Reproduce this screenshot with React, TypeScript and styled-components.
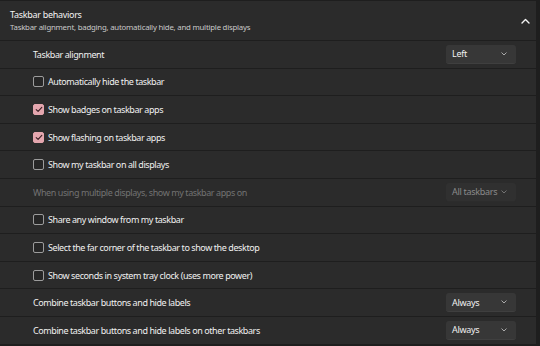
import styled, { createGlobalStyle } from "styled-components";

const GlobalStyle = createGlobalStyle`
  html, body {
    margin: 0;
    padding: 0;
    background: #202020;
  }
  body {
    font-family: "Noto Sans", "Open Sans", sans-serif;
    -webkit-font-smoothing: antialiased;
  }
`;

type Setting =
  | { kind: "select"; label: string; value: string; disabled?: boolean }
  | { kind: "check"; label: string; checked: boolean };

const settings: Setting[] = [
  { kind: "select", label: "Taskbar alignment", value: "Left" },
  { kind: "check", label: "Automatically hide the taskbar", checked: false },
  { kind: "check", label: "Show badges on taskbar apps", checked: true },
  { kind: "check", label: "Show flashing on taskbar apps", checked: true },
  { kind: "check", label: "Show my taskbar on all displays", checked: false },
  {
    kind: "select",
    label: "When using multiple displays, show my taskbar apps on",
    value: "All taskbars",
    disabled: true,
  },
  { kind: "check", label: "Share any window from my taskbar", checked: false },
  {
    kind: "check",
    label: "Select the far corner of the taskbar to show the desktop",
    checked: false,
  },
  {
    kind: "check",
    label: "Show seconds in system tray clock (uses more power)",
    checked: false,
  },
  { kind: "select", label: "Combine taskbar buttons and hide labels", value: "Always" },
  {
    kind: "select",
    label: "Combine taskbar buttons and hide labels on other taskbars",
    value: "Always",
  },
];

const ChevronUp = () => (
  <svg width="9" height="6" viewBox="0 0 9 6" fill="none">
    <path d="M1 5 L4.5 1.5 L8 5" stroke="#f5f5f5" strokeWidth="1.4" strokeLinecap="round" strokeLinejoin="round" />
  </svg>
);

const ChevronDown = ({ dim }: { dim?: boolean }) => (
  <svg width="6" height="4" viewBox="0 0 6 4" fill="none">
    <path d="M0.8 0.8 L3 3 L5.2 0.8" stroke={dim ? "#7a7a7a" : "#b8b8b8"} strokeWidth="0.9" strokeLinecap="round" strokeLinejoin="round" />
  </svg>
);

const CheckMark = () => (
  <svg width="8" height="7" viewBox="0 0 8 7" fill="none">
    <path d="M1.2 3.6 L3.1 5.4 L6.8 1.4" stroke="#3a1d22" strokeWidth="1.1" strokeLinecap="round" strokeLinejoin="round" />
  </svg>
);

const App = () => (
  <>
    <GlobalStyle />
    <Panel>
      <Header>
        <HeaderText>
          <Title>Taskbar behaviors</Title>
          <Subtitle>
            Taskbar alignment, badging, automatically hide, and multiple displays
          </Subtitle>
        </HeaderText>
        <Toggle>
          <ChevronUp />
        </Toggle>
      </Header>
      <List>
        {settings.map((s) =>
          s.kind === "check" ? (
            <Row key={s.label}>
              <CheckLabel>
                <Box $checked={s.checked}>{s.checked && <CheckMark />}</Box>
                {s.label}
              </CheckLabel>
            </Row>
          ) : (
            <Row key={s.label}>
              <Label $disabled={s.disabled}>{s.label}</Label>
              <Select $disabled={s.disabled}>
                <span>{s.value}</span>
                <ChevronDown dim={s.disabled} />
              </Select>
            </Row>
          )
        )}
      </List>
    </Panel>
  </>
);

const Panel = styled.div`
  width: 540px;
  height: 346px;
  background: #1e1e1e;
  overflow: hidden;
  display: flex;
  flex-direction: column;
  gap: 1px;
  padding-top: 1px;
  box-sizing: border-box;
  padding-right: 4px;
`;

const Header = styled.div`
  height: 39px;
  flex: none;
  background: #2b2b2b;
  display: flex;
  align-items: center;
  justify-content: space-between;
  padding: 0 6px 0 10px;
  box-sizing: border-box;
`;

const HeaderText = styled.div`
  display: flex;
  flex-direction: column;
  gap: 1px;
  white-space: nowrap;
`;

const Title = styled.div`
  color: #f3f3f3;
  font-size: 9px;
  letter-spacing: -0.3px;
  line-height: 13px;
`;

const Subtitle = styled.div`
  color: #c8c8c8;
  font-size: 7.8px;
  letter-spacing: -0.22px;
  line-height: 11px;
`;

const Toggle = styled.div`
  display: flex;
  align-items: center;
`;

const List = styled.div`
  display: flex;
  flex-direction: column;
  gap: 1px;
`;

const Row = styled.div`
  height: 26.6px;
  flex: none;
  background: #2b2b2b;
  display: flex;
  align-items: center;
  justify-content: space-between;
  padding: 0 20px 0 33px;
  box-sizing: border-box;
  white-space: nowrap;
`;

const Label = styled.div<{ $disabled?: boolean }>`
  color: ${(p) => (p.$disabled ? "#727272" : "#f0f0f0")};
  font-size: 9px;
  letter-spacing: -0.42px;
`;

const CheckLabel = styled.label`
  display: flex;
  align-items: center;
  gap: 4px;
  color: #f0f0f0;
  font-size: 9px;
  letter-spacing: -0.42px;
`;

const Box = styled.span<{ $checked: boolean }>`
  width: 11px;
  height: 11px;
  flex: none;
  box-sizing: border-box;
  border-radius: 2px;
  display: flex;
  align-items: center;
  justify-content: center;
  background: ${(p) => (p.$checked ? "#e4a6ae" : "#262626")};
  border: 1px solid ${(p) => (p.$checked ? "#e4a6ae" : "#9c9c9c")};
`;

const Select = styled.div<{ $disabled?: boolean }>`
  width: 70px;
  height: 19px;
  box-sizing: border-box;
  border-radius: 3px;
  background: ${(p) => (p.$disabled ? "#303030" : "#373737")};
  border-bottom: 1px solid ${(p) => (p.$disabled ? "#2c2c2c" : "#3f3f3f")};
  display: flex;
  align-items: center;
  justify-content: space-between;
  padding: 0 9px 0 6px;
  color: ${(p) => (p.$disabled ? "#8a8a8a" : "#f0f0f0")};
  font-size: 9px;
  letter-spacing: -0.3px;
`;

export default App;
